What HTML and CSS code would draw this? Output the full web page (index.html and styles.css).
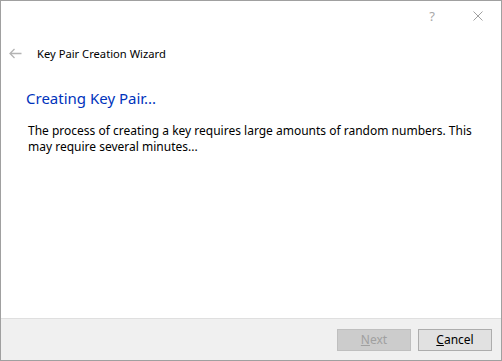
FILE: index.html
```html
<!DOCTYPE html>
<html>
<head>
<meta charset="utf-8">
<link rel="stylesheet" href="styles.css">
</head>
<body>
<div class="window">
  <div class="titlebar">
    <span class="help">?</span>
    <span class="close">
      <svg width="10" height="10" viewBox="0 0 10 10"><path d="M0.5 0.5 L9.5 9.5 M9.5 0.5 L0.5 9.5" stroke="#a0a0a0" stroke-width="1" fill="none"/></svg>
    </span>
  </div>
  <div class="header">
    <span class="back">
      <svg width="13" height="11" viewBox="0 0 13 11"><path d="M12.5 5.5 H1.5 M5.5 1 L1 5.5 L5.5 10" stroke="#b4b4b4" stroke-width="1.3" fill="none"/></svg>
    </span>
    <span class="wizard-title">Key Pair Creation Wizard</span>
  </div>
  <div class="content">
    <h1 class="main-instruction">Creating Key Pair...</h1>
    <p class="desc">The process of creating a key requires large amounts of random numbers. This may require several minutes...</p>
  </div>
  <div class="footer">
    <button class="btn disabled"><u>N</u>ext</button>
    <button class="btn"><u>C</u>ancel</button>
  </div>
</div>
</body>
</html>
```
FILE: styles.css
```css
html, body {
  margin: 0;
  padding: 0;
  background: #ffffff;
}
.window {
  box-sizing: border-box;
  width: 502px;
  height: 361px;
  border: 1px solid #a0a0a0;
  display: flex;
  flex-direction: column;
  font-family: "Noto Sans", "Open Sans", sans-serif;
  font-size: 12px;
  color: #000;
  background: #fff;
}
.titlebar {
  height: 29px;
  display: flex;
  justify-content: flex-end;
  align-items: center;
}
.help {
  color: #a8a8a8;
  font-size: 13px;
  margin-right: 38px;
}
.close {
  display: flex;
  margin-right: 18px;
}
.header {
  height: 47px;
  display: flex;
  align-items: center;
  padding-left: 8px;
}
.back {
  display: flex;
  width: 28px;
}
.wizard-title {
  font-size: 11.2px;
}
.content {
  flex: 1;
  padding: 10px 18px 0 25px;
}
.main-instruction {
  margin: 0;
  font-weight: normal;
  font-size: 15px;
  line-height: 22px;
  color: #0033bc;
}
.desc {
  margin: 14px 0 0 2px;
  line-height: 16px;
}
.footer {
  height: 41px;
  border-top: 1px solid #dfdfdf;
  background: #f0f0f0;
  display: flex;
  justify-content: flex-end;
  align-items: center;
  gap: 7px;
  padding-right: 9px;
}
.btn {
  box-sizing: border-box;
  width: 74px;
  height: 22px;
  font-family: inherit;
  font-size: 12px;
  background: #e1e1e1;
  border: 1px solid #adadad;
  padding: 0;
  color: #000;
}
.btn.disabled {
  background: #cccccc;
  border-color: #bfbfbf;
  color: #a0a0a0;
}
```
